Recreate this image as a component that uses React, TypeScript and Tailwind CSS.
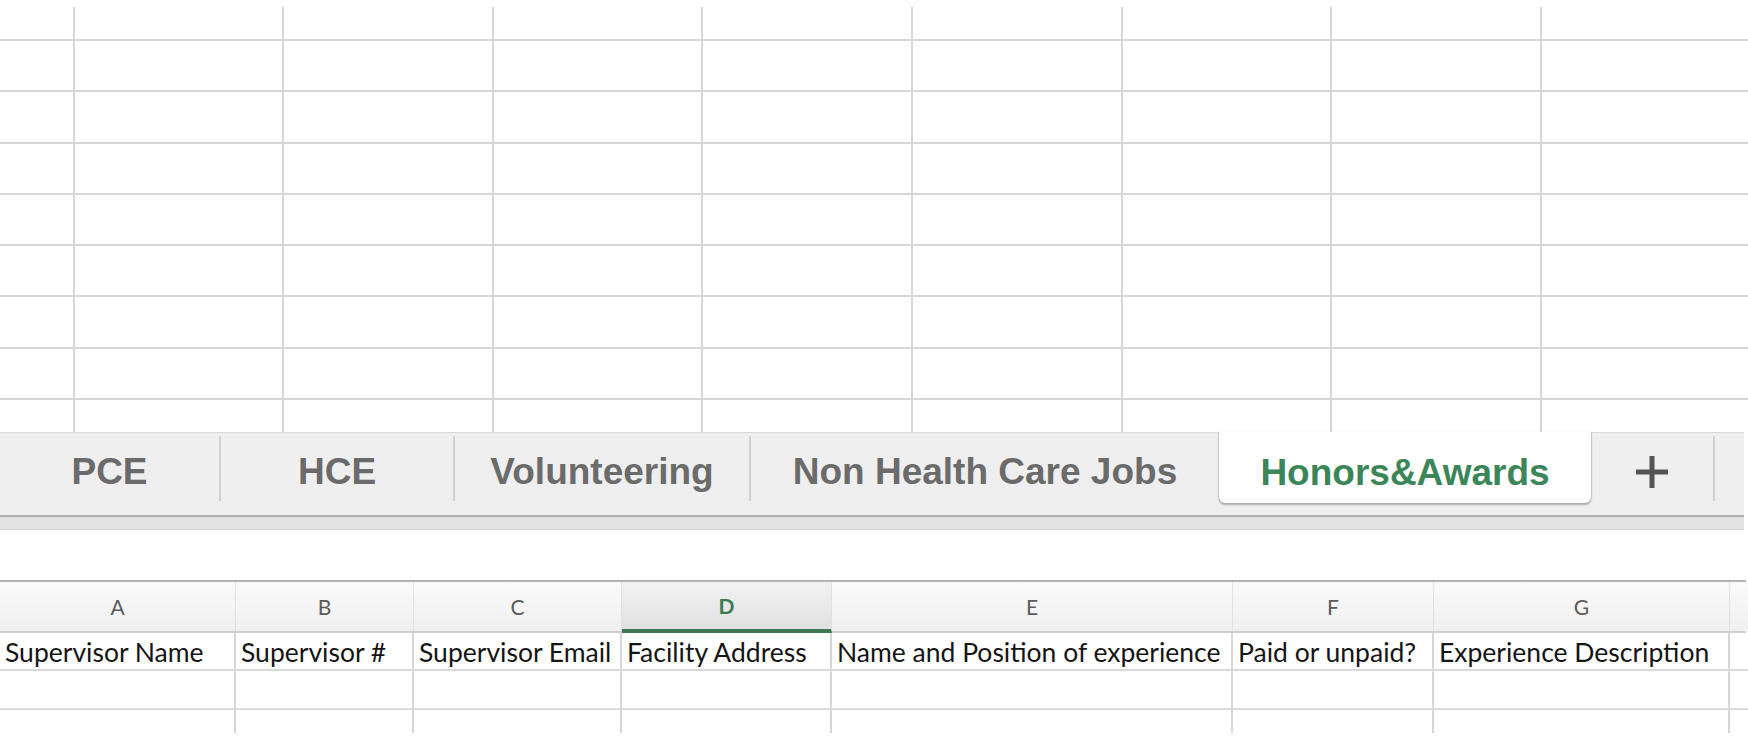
const GRID_ROWS = 9;
const GRID_COLS = 9;

type Tab = { label: string; width: string; active?: boolean };

const tabs: Tab[] = [
  { label: "PCE", width: "w-[219px]" },
  { label: "HCE", width: "w-[232px]" },
  { label: "Volunteering", width: "w-[294px]" },
  { label: "Non Health Care Jobs", width: "w-[468px]" },
  { label: "Honors&Awards", width: "w-[372px]", active: true },
];

type Column = { letter: string; title: string; width: string; selected?: boolean };

const columns: Column[] = [
  { letter: "A", title: "Supervisor Name", width: "w-[236px]" },
  { letter: "B", title: "Supervisor #", width: "w-[178px]" },
  { letter: "C", title: "Supervisor Email", width: "w-[208px]" },
  { letter: "D", title: "Facility Address", width: "w-[210px]", selected: true },
  { letter: "E", title: "Name and Position of experience", width: "w-[401px]" },
  { letter: "F", title: "Paid or unpaid?", width: "w-[201px]" },
  { letter: "G", title: "Experience Description", width: "w-[296px]" },
  { letter: "", title: "", width: "w-[18px]" },
];

function EmptyGrid() {
  const cells = [];
  for (let r = 0; r < GRID_ROWS; r++) {
    for (let c = 0; c < GRID_COLS; c++) {
      const last = r === GRID_ROWS - 1;
      cells.push(
        <div
          key={`${r}-${c}`}
          className={
            last
              ? "border-r-2 border-[#d6d6d6]"
              : "border-r-2 border-b-2 border-[#d6d6d6]"
          }
        />
      );
    }
  }
  return (
    <div className="h-[432px] overflow-hidden pt-[7px]">
      <div className="grid grid-cols-[74.6px_repeat(8,209.6px)] grid-rows-[34px_repeat(7,51.3px)_32px]">
        {cells}
      </div>
    </div>
  );
}

function Separator() {
  return <div className="w-[2px] h-[65px] mt-[3px] bg-[#d2d2d2] shrink-0" />;
}

function SheetTabs() {
  return (
    <div className="w-[1744px]">
      <div className="h-[83px] flex bg-[#efefef] border-t border-[#d9d9d9] font-['Liberation_Sans',Arial,sans-serif] font-bold text-[37px]">
        {tabs.map((tab, i) =>
          tab.active ? (
            <div
              key={tab.label}
              className={`${tab.width} h-[71px] -mt-px shrink-0 bg-white rounded-b-[6px] shadow-[0_2px_2px_rgba(0,0,0,0.28),1px_0_1px_rgba(0,0,0,0.12),-1px_0_1px_rgba(0,0,0,0.12)] flex items-center justify-center pt-[10px] text-[#3b8659]`}
            >
              {tab.label}
            </div>
          ) : (
            <div key={tab.label} className="flex shrink-0">
              <div
                className={`${tab.width} h-full flex items-center justify-center pb-[4px] text-[#6b6b6b]`}
              >
                {tab.label}
              </div>
              {i < 3 && <Separator />}
            </div>
          )
        )}
        <div className="w-[122px] h-full shrink-0 flex items-center justify-center pb-[4px]">
          <svg width="34" height="34" viewBox="0 0 34 34">
            <path d="M17 1v32M1 17h32" stroke="#555" strokeWidth="5" />
          </svg>
        </div>
        <Separator />
        <div className="flex-1" />
      </div>
      <div className="h-[2px] bg-[#b1b1b1]" />
      <div className="h-[12px] bg-[#e3e3e3]" />
      <div className="h-px bg-[#d3d3d3]" />
    </div>
  );
}

function Sheet() {
  return (
    <div className="font-['Lato','Open_Sans',sans-serif]">
      <div className="flex h-[53px] border-t-2 border-[#b4b4b4] border-b-2 border-b-[#cfcfcf] w-[1746px]">
        {columns.map((col, i) => (
          <div
            key={i}
            className={`${col.width} shrink-0 flex items-center justify-center text-[21px] ${
              col.selected
                ? "bg-gradient-to-b from-[#f2f2f2] to-[#e1e1e1] border-b-4 border-[#3d7a52] text-[#3a7d55] font-bold -mb-[2px]"
                : "bg-gradient-to-b from-[#fafafa] to-[#f0f0f0] text-[#5a5a5a]"
            } ${i < columns.length - 1 ? "border-r border-r-[#e1e1e1]" : ""}`}
          >
            {col.letter}
          </div>
        ))}
      </div>
      <div className="flex h-[38px] border-b-2 border-[#d9d9d9]">
        {columns.map((col, i) => (
          <div
            key={i}
            className={`${col.width} shrink-0 flex items-center px-[5px] pt-[3px] whitespace-nowrap text-[26.5px] text-[#151515] ${
              i < columns.length - 1 ? "border-r-2 border-[#d6d6d6]" : ""
            }`}
          >
            {col.title}
          </div>
        ))}
      </div>
      <div className="flex h-[39px] border-b-2 border-[#d9d9d9]">
        {columns.map((col, i) => (
          <div
            key={i}
            className={`${col.width} shrink-0 ${i < columns.length - 1 ? "border-r-2 border-[#d6d6d6]" : ""}`}
          />
        ))}
      </div>
      <div className="flex h-[23px]">
        {columns.map((col, i) => (
          <div
            key={i}
            className={`${col.width} shrink-0 ${i < columns.length - 1 ? "border-r-2 border-[#d6d6d6]" : ""}`}
          />
        ))}
      </div>
    </div>
  );
}

export default function App() {
  return (
    <div className="w-[1748px] h-[748px] overflow-hidden bg-white">
      <EmptyGrid />
      <SheetTabs />
      <div className="h-[50px]" />
      <Sheet />
    </div>
  );
}
